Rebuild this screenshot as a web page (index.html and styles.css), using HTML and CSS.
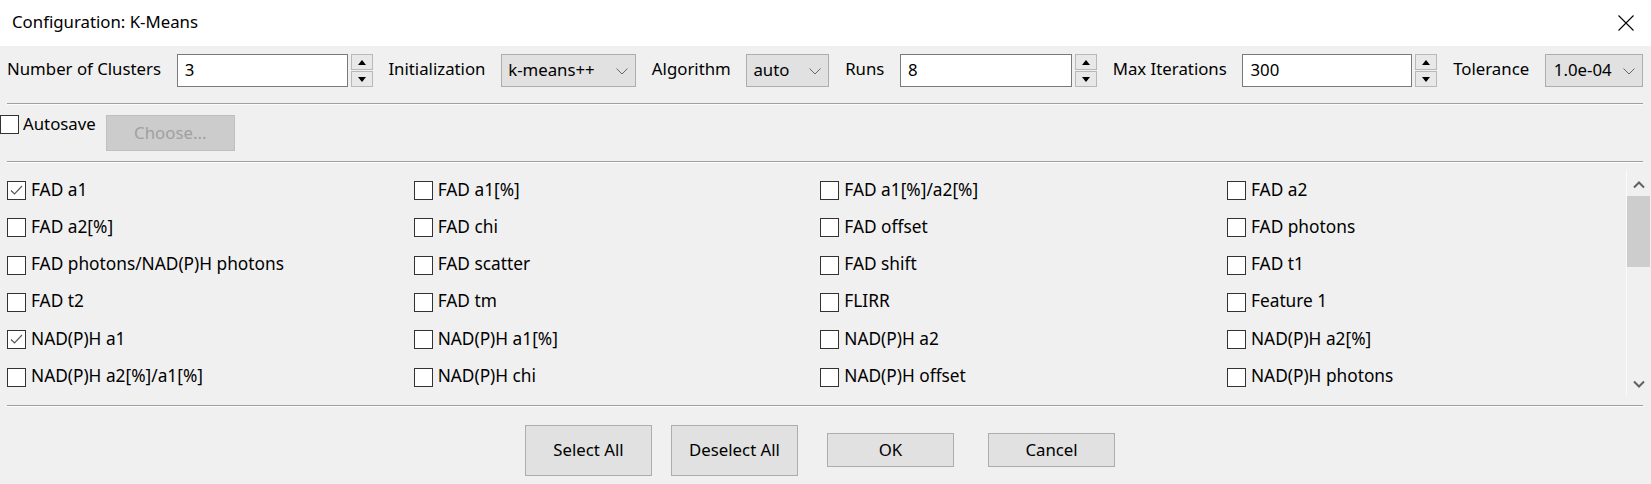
FILE: index.html
```html
<!DOCTYPE html>
<html>
<head>
<meta charset="utf-8">
<link rel="stylesheet" href="styles.css">
</head>
<body>
<div class="window">
  <div class="titlebar">
    <span class="title">Configuration: K-Means</span>
    <svg class="close" width="16" height="16" viewBox="0 0 16 16"><path d="M0.5 0.5 L15.5 15.5 M15.5 0.5 L0.5 15.5" stroke="#000" stroke-width="1.1" fill="none"/></svg>
  </div>

  <div class="toolbar">
    <span class="lbl">Number of Clusters</span>
    <div class="spinbox">
      <div class="input w-clusters">3</div>
      <div class="spin">
        <div class="spin-btn"><svg width="8" height="5" viewBox="0 0 8 5"><path d="M0 5 L4 0 L8 5 Z" fill="#000"/></svg></div>
        <div class="spin-btn"><svg width="8" height="5" viewBox="0 0 8 5"><path d="M0 0 L4 5 L8 0 Z" fill="#000"/></svg></div>
      </div>
    </div>
    <span class="lbl">Initialization</span>
    <div class="combo w-init"><span>k-means++</span><svg width="12" height="7" viewBox="0 0 12 7"><path d="M0.5 0.5 L6 6 L11.5 0.5" stroke="#666" stroke-width="1" fill="none"/></svg></div>
    <span class="lbl">Algorithm</span>
    <div class="combo w-algo"><span>auto</span><svg width="12" height="7" viewBox="0 0 12 7"><path d="M0.5 0.5 L6 6 L11.5 0.5" stroke="#666" stroke-width="1" fill="none"/></svg></div>
    <span class="lbl">Runs</span>
    <div class="spinbox">
      <div class="input w-runs">8</div>
      <div class="spin">
        <div class="spin-btn"><svg width="8" height="5" viewBox="0 0 8 5"><path d="M0 5 L4 0 L8 5 Z" fill="#000"/></svg></div>
        <div class="spin-btn"><svg width="8" height="5" viewBox="0 0 8 5"><path d="M0 0 L4 5 L8 0 Z" fill="#000"/></svg></div>
      </div>
    </div>
    <span class="lbl">Max Iterations</span>
    <div class="spinbox">
      <div class="input w-iter">300</div>
      <div class="spin">
        <div class="spin-btn"><svg width="8" height="5" viewBox="0 0 8 5"><path d="M0 5 L4 0 L8 5 Z" fill="#000"/></svg></div>
        <div class="spin-btn"><svg width="8" height="5" viewBox="0 0 8 5"><path d="M0 0 L4 5 L8 0 Z" fill="#000"/></svg></div>
      </div>
    </div>
    <span class="lbl">Tolerance</span>
    <div class="combo w-tol"><span>1.0e-04</span><svg width="12" height="7" viewBox="0 0 12 7"><path d="M0.5 0.5 L6 6 L11.5 0.5" stroke="#666" stroke-width="1" fill="none"/></svg></div>
  </div>

  <div class="sep"></div>

  <div class="autosave-row">
    <label class="check autosave"><span class="box"></span><span class="check-text">Autosave</span></label>
    <div class="btn disabled choose">Choose...</div>
  </div>

  <div class="sep"></div>

  <div class="list">
    <div class="grid">
      <label class="check"><span class="box checked"><svg width="15" height="15" viewBox="0 0 15 15"><path d="M2 7.5 L5.5 11 L13 3" stroke="#555" stroke-width="1.1" fill="none"/></svg></span><span class="check-text">FAD a1</span></label>
      <label class="check"><span class="box"></span><span class="check-text">FAD a1[%]</span></label>
      <label class="check"><span class="box"></span><span class="check-text">FAD a1[%]/a2[%]</span></label>
      <label class="check"><span class="box"></span><span class="check-text">FAD a2</span></label>

      <label class="check"><span class="box"></span><span class="check-text">FAD a2[%]</span></label>
      <label class="check"><span class="box"></span><span class="check-text">FAD chi</span></label>
      <label class="check"><span class="box"></span><span class="check-text">FAD offset</span></label>
      <label class="check"><span class="box"></span><span class="check-text">FAD photons</span></label>

      <label class="check"><span class="box"></span><span class="check-text">FAD photons/NAD(P)H photons</span></label>
      <label class="check"><span class="box"></span><span class="check-text">FAD scatter</span></label>
      <label class="check"><span class="box"></span><span class="check-text">FAD shift</span></label>
      <label class="check"><span class="box"></span><span class="check-text">FAD t1</span></label>

      <label class="check"><span class="box"></span><span class="check-text">FAD t2</span></label>
      <label class="check"><span class="box"></span><span class="check-text">FAD tm</span></label>
      <label class="check"><span class="box"></span><span class="check-text">FLIRR</span></label>
      <label class="check"><span class="box"></span><span class="check-text">Feature 1</span></label>

      <label class="check"><span class="box checked"><svg width="15" height="15" viewBox="0 0 15 15"><path d="M2 7.5 L5.5 11 L13 3" stroke="#555" stroke-width="1.1" fill="none"/></svg></span><span class="check-text">NAD(P)H a1</span></label>
      <label class="check"><span class="box"></span><span class="check-text">NAD(P)H a1[%]</span></label>
      <label class="check"><span class="box"></span><span class="check-text">NAD(P)H a2</span></label>
      <label class="check"><span class="box"></span><span class="check-text">NAD(P)H a2[%]</span></label>

      <label class="check"><span class="box"></span><span class="check-text">NAD(P)H a2[%]/a1[%]</span></label>
      <label class="check"><span class="box"></span><span class="check-text">NAD(P)H chi</span></label>
      <label class="check"><span class="box"></span><span class="check-text">NAD(P)H offset</span></label>
      <label class="check"><span class="box"></span><span class="check-text">NAD(P)H photons</span></label>
    </div>
    <div class="scrollbar">
      <div class="arrow up"><svg width="12" height="8" viewBox="0 0 12 8"><path d="M1 6.5 L6 1.5 L11 6.5" stroke="#606060" stroke-width="2" fill="none"/></svg></div>
      <div class="track"><div class="thumb"></div></div>
      <div class="arrow"><svg width="12" height="8" viewBox="0 0 12 8"><path d="M1 1.5 L6 6.5 L11 1.5" stroke="#606060" stroke-width="2" fill="none"/></svg></div>
    </div>
  </div>

  <div class="sep"></div>

  <div class="buttons">
    <div class="btn tall">Select All</div>
    <div class="btn tall deselect">Deselect All</div>
    <div class="btn short ok">OK</div>
    <div class="btn short cancel">Cancel</div>
  </div>
</div>
</body>
</html>
```

FILE: styles.css
```css
* { box-sizing: border-box; }

html, body {
  margin: 0;
  padding: 0;
  background: #f0f0f0;
}

body {
  font-family: "Noto Sans", "Open Sans", sans-serif;
  font-size: 16.8px;
  color: #000;
  width: 1651px;
  height: 484px;
  overflow: hidden;
}

.window {
  display: flex;
  flex-direction: column;
  width: 1651px;
  height: 484px;
}

/* Title bar */
.titlebar {
  height: 46px;
  background: #fff;
  display: flex;
  align-items: center;
  justify-content: space-between;
  padding: 0 17px 0 12px;
}
.title {
  font-size: 16.8px;
  line-height: 1;
  margin-top: -2px;
}
.close {
  display: block;
  margin-top: -1px;
}

/* Toolbar */
.toolbar {
  display: flex;
  align-items: center;
  gap: 15.7px;
  padding: 8px 0 16px 7px;
  height: 57px;
}
.lbl {
  white-space: nowrap;
  line-height: 1;
  margin-top: -3px;
}
.spinbox {
  display: flex;
  gap: 3px;
  align-items: stretch;
}
.input {
  height: 33px;
  background: #fff;
  border: 1px solid #7a7a7a;
  padding: 0 7px;
  display: flex;
  align-items: center;
  line-height: 1;
}
.w-clusters { width: 171px; }
.w-runs { width: 172px; }
.w-iter { width: 170px; }

.spin {
  width: 22px;
  display: flex;
  flex-direction: column;
  gap: 1px;
}
.spin-btn {
  flex: 1;
  background: #e8e8e8;
  border: 1px solid #b8b8b8;
  display: flex;
  align-items: center;
  justify-content: center;
}
.spin-btn svg { display: block; }

.combo {
  height: 33px;
  background: #e1e1e1;
  border: 1px solid #adadad;
  display: flex;
  align-items: center;
  justify-content: space-between;
  padding: 0 7px 0 6px;
  line-height: 1;
}
.combo svg { display: block; flex: none; margin-top: 1px; }
.w-init { width: 135px; }
.w-algo { width: 83px; }
.w-tol { width: 98px; padding-left: 8px; }

/* Separators */
.sep {
  height: 2px;
  margin: 0 8px 0 7px;
  border-top: 1px solid #a0a0a0;
  border-bottom: 1px solid #fcfcfc;
  flex: none;
}

/* Autosave row */
.autosave-row {
  display: flex;
  align-items: flex-start;
  padding: 10px 0 9px 0;
  height: 56px;
}
.check {
  display: flex;
  align-items: center;
  gap: 5px;
  white-space: nowrap;
  line-height: 1;
}
.box {
  width: 19px;
  height: 19px;
  flex: none;
  background: #fff;
  border: 1px solid #333;
  display: flex;
  align-items: center;
  justify-content: center;
}
.box svg { display: block; }
.check-text { margin-top: -3px; }
.grid .check-text { font-size: 17.3px; }
.autosave { margin-right: 10px; gap: 4px; }
.autosave .check-text { margin-top: 0; }

.btn {
  background: #e1e1e1;
  border: 1px solid #adadad;
  display: flex;
  align-items: center;
  justify-content: center;
  line-height: 1;
  white-space: nowrap;
}
.btn.disabled {
  background: #cccccc;
  border-color: #bfbfbf;
  color: #a0a0a0;
}
.choose {
  width: 129px;
  height: 36px;
}

/* List */
.list {
  display: flex;
  margin: 7px 1px 8px 0;
  height: 227px;
}
.grid {
  flex: 1;
  display: grid;
  grid-template-columns: repeat(3, 406.67px) 1fr;
  grid-auto-rows: 37.33px;
  align-items: center;
  padding: 2px 0 0 7px;
}

.scrollbar {
  width: 24px;
  display: flex;
  flex-direction: column;
  border-left: 1px solid #fafafa;
}
.arrow {
  height: 26px;
  display: flex;
  align-items: center;
  justify-content: center;
}
.arrow.up { padding-top: 3px; }
.arrow svg { display: block; }
.track {
  flex: 1;
}
.thumb {
  height: 71px;
  background: #cdcdcd;
}

/* Bottom buttons */
.buttons {
  display: flex;
  align-items: flex-start;
  padding: 18px 0 0 525px;
  height: 77px;
}
.buttons .btn { width: 127px; }
.btn.tall { height: 51px; }
.btn.short { height: 34px; margin-top: 8px; }
.deselect { margin-left: 19px; }
.ok { margin-left: 29px; }
.cancel { margin-left: 34px; }
```
